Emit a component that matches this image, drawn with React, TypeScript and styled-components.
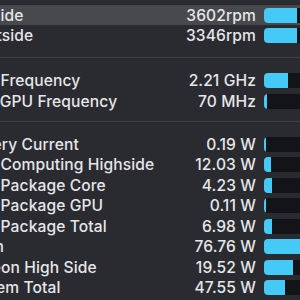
import React from "react";
import styled, { createGlobalStyle } from "styled-components";

const GlobalStyle = createGlobalStyle`
  html, body {
    margin: 0;
    padding: 0;
    background: #2a2b30;
    overflow: hidden;
  }
  body {
    width: 300px;
    height: 300px;
    font-family: Inter, "Noto Sans", "Liberation Sans", sans-serif;
    -webkit-font-smoothing: antialiased;
  }
`;

const Menu = styled.div`
  width: 361px;
  margin-left: -37px;
  padding-top: 4.75px;
`;

const Row = styled.div<{ $active?: boolean }>`
  height: 20.5px;
  display: grid;
  grid-template-columns: 1fr auto 48px;
  column-gap: 8px;
  align-items: center;
  padding-right: 12px;
  background: ${(p) => (p.$active ? "#48494d" : "transparent")};
  color: #e6e6e8;
  font-size: 15.6px;
  font-weight: 500;
  letter-spacing: 0.1px;
`;

const Label = styled.span`
  white-space: nowrap;
  overflow: hidden;
`;

const Value = styled.span`
  text-align: right;
  white-space: nowrap;
`;

const Track = styled.div`
  height: 15px;
  border-radius: 4px;
  background: #131417;
  overflow: hidden;
`;

const Fill = styled.div`
  height: 100%;
  background: #45c9f6;
`;

const Separator = styled.div<{ $top: number; $bottom: number }>`
  height: 1px;
  margin: ${(p) => `${p.$top}px 0 ${p.$bottom}px`};
  background: #404146;
`;

type Item = { label: string; value: string; fill: number; active?: boolean };

const fans: Item[] = [
  { label: "Leftside", value: "3602rpm", fill: 33, active: true },
  { label: "Rightside", value: "3346rpm", fill: 33 },
];

const freqs: Item[] = [
  { label: "CPU Frequency", value: "2.21 GHz", fill: 24 },
  { label: "Intel GPU Frequency", value: "70 MHz", fill: 2.5 },
];

const power: Item[] = [
  { label: "Battery Current", value: "0.19 W", fill: 2 },
  { label: "CPU Computing Highside", value: "12.03 W", fill: 7 },
  { label: "CPU Package Core", value: "4.23 W", fill: 8 },
  { label: "CPU Package GPU", value: "0.11 W", fill: 2 },
  { label: "CPU Package Total", value: "6.98 W", fill: 8 },
  { label: "DC In", value: "76.76 W", fill: 48 },
  { label: "Radeon High Side", value: "19.52 W", fill: 29 },
  { label: "System Total", value: "47.55 W", fill: 21 },
];

const Section = ({ items }: { items: Item[] }) => (
  <>
    {items.map((it) => (
      <Row key={it.label} $active={it.active}>
        <Label>{it.label}</Label>
        <Value>{it.value}</Value>
        <Track>
          <Fill style={{ width: `${it.fill}px` }} />
        </Track>
      </Row>
    ))}
  </>
);

const App = () => {
  return (
    <>
      <GlobalStyle />
      <Menu>
        <Section items={fans} />
        <Separator $top={11.5} $bottom={12} />
        <Section items={freqs} />
        <Separator $top={10} $bottom={11.5} />
        <Section items={power} />
      </Menu>
    </>
  );
};

export default App;
